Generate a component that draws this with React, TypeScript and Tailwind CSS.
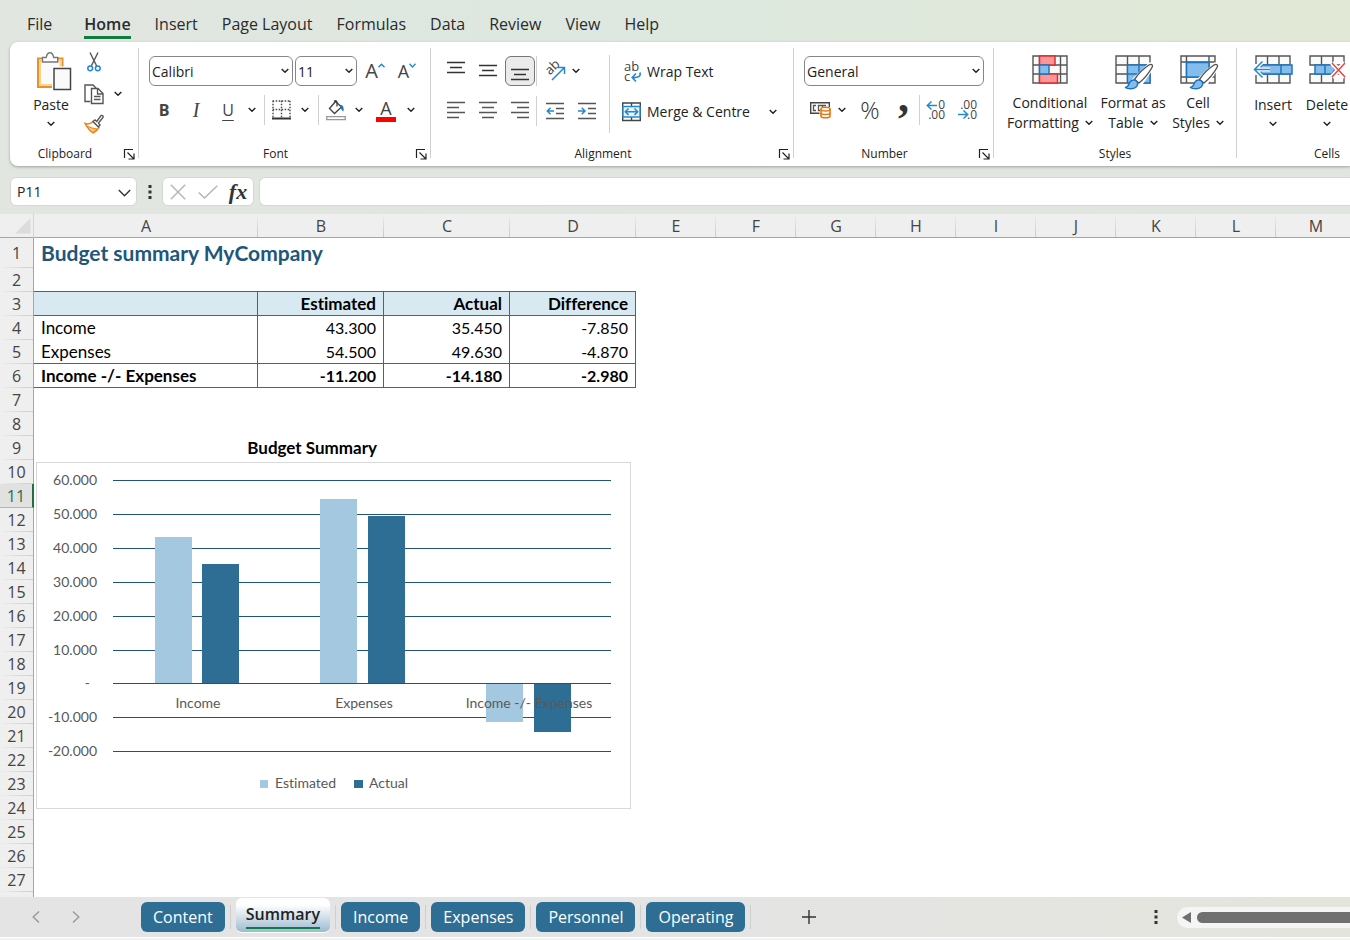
import type { ReactNode } from "react";

const menuTabs = ["Insert", "Page Layout", "Formulas", "Data", "Review", "View", "Help"];
const columns = ["A", "B", "C", "D", "E", "F", "G", "H", "I", "J", "K", "L", "M"];
const rowCount = 27;
const activeRow = 11;

const budget = [
  { name: "Income", estimated: 43300, actual: 35450 },
  { name: "Expenses", estimated: 54500, actual: 49630 },
  { name: "Income -/- Expenses", estimated: -11200, actual: -14180 },
];

function format(value: number) {
  return String(value).replace(/(\d)(?=(\d{3})+$)/g, "$1.");
}

const cells: Record<string, string> = {
  A1: "Budget summary MyCompany",
  B3: "Estimated",
  C3: "Actual",
  D3: "Difference",
  B9: "Budget Summary",
};
budget.forEach((item, i) => {
  const row = i + 4;
  cells[`A${row}`] = item.name;
  cells[`B${row}`] = format(item.estimated);
  cells[`C${row}`] = format(item.actual);
  cells[`D${row}`] = format(item.actual - item.estimated);
});

function Chevron({ className = "" }: { className?: string }) {
  return (
    <svg width="8" height="6" viewBox="0 0 8 6" fill="none" stroke="#222" strokeWidth="1.4" className={`shrink-0 ${className}`}>
      <path d="M.7 1 4 4.3 7.3 1" />
    </svg>
  );
}

function Icon({ w, h, children }: { w: number; h: number; children: ReactNode }) {
  return (
    <svg width={w} height={h} viewBox={`0 0 ${w} ${h}`} fill="none" className="shrink-0 overflow-visible">
      {children}
    </svg>
  );
}

function IconButton({ label, className = "w-8", children }: { label: string; className?: string; children: ReactNode }) {
  return (
    <button type="button" aria-label={label} className={`flex h-8 shrink-0 items-center justify-center ${className}`}>
      {children}
    </button>
  );
}

function MenuArrow({ label, className = "w-4" }: { label: string; className?: string }) {
  return (
    <IconButton label={label} className={className}>
      <Chevron />
    </IconButton>
  );
}

function SmallDivider() {
  return <div className="h-[30px] w-px shrink-0 bg-[#d0d0d0]" />;
}

function GroupDivider() {
  return <div className="h-[110px] w-px shrink-0 bg-[#d0d0d0]" />;
}

function Group({ label, launcher = true, className = "", children }: { label: string; launcher?: boolean; className?: string; children: ReactNode }) {
  return (
    <section aria-label={label} className={`flex shrink-0 flex-col ${className}`}>
      <div className="h-[98px]">{children}</div>
      <div className="flex h-4 items-center">
        <h2 className={`flex-1 text-center text-xs leading-4 ${launcher ? "pr-1" : ""}`}>{label}</h2>
        {launcher && (
          <button type="button" aria-label={`${label} settings`} className="mr-1">
            <Icon w={10} h={11}>
              <path d="M.5 9V.5H9M3.5 3.5l6 6M10 4.5v5.5H4.5" stroke="#222" strokeWidth="1.2" />
            </Icon>
          </button>
        )}
      </div>
    </section>
  );
}

function SelectBox({ label, value, className }: { label: string; value: string; className: string }) {
  return (
    <div className={`relative shrink-0 ${className}`}>
      <select aria-label={label} defaultValue={value} className="h-[30px] w-full appearance-none rounded-md border border-[#868686] bg-white pt-0.5 pl-0.5 text-sm text-[#222]">
        <option>{value}</option>
      </select>
      <Chevron className="pointer-events-none absolute top-3 right-1" />
    </div>
  );
}

function Lines({ lines, color = "#555" }: { lines: [number, number, number][]; color?: string }) {
  return (
    <Icon w={18} h={20}>
      {lines.map(([x1, x2, y]) => (
        <path key={y} d={`M${x1} ${y}.5H${x2}`} stroke={color} strokeWidth="1.4" />
      ))}
    </Icon>
  );
}

function PasteIcon() {
  return (
    <Icon w={34} h={39}>
      <path d="M1 6.500h24.500v28.500H1z" fill="#fafafa" stroke="#e8912d" strokeWidth="2" />
      <path d="M3 8.500h20.500v24.500H3z" stroke="#fbd48c" strokeWidth="2" />
      <path d="M5.500 10V5.500h3.700C9.700 2.700 11 .7 13 .7s3.200 2 3.700 4.800h4V10z" fill="#fff" stroke="#777" strokeWidth="1.4" />
      <path d="M17 16.500h16.500v21H17z" stroke="#fff" strokeWidth="4" />
      <path d="M17 16.500h16.500v21H17z" fill="#fafafa" stroke="#444" strokeWidth="1.5" />
    </Icon>
  );
}

function CutIcon() {
  return (
    <Icon w={14} h={20}>
      <path d="M3 .5 9.700 14M11 .5 4.300 14" stroke="#555" strokeWidth="1.4" />
      <circle cx="3.200" cy="16.300" r="2.400" stroke="#2488cf" strokeWidth="1.500" />
      <circle cx="10.800" cy="16.300" r="2.400" stroke="#2488cf" strokeWidth="1.500" />
    </Icon>
  );
}

function CopyIcon() {
  return (
    <Icon w={20} h={20}>
      <path d="M6.500 17.500H1V1h8l3 3" stroke="#555" strokeWidth="1.400" />
      <path d="M7.500 4.500H14l5 5v10H7.500z" fill="#fff" stroke="#555" strokeWidth="1.400" />
      <path d="M13.500 4.500V10H19M10 12.500h6.500M10 15.500h6.500" stroke="#555" strokeWidth="1.300" />
    </Icon>
  );
}

function PainterIcon() {
  return (
    <Icon w={20} h={20}>
      <path d="M1 9.500c3 1 5.500.5 8-2l6 6c-1 2-3 4-6 5.500C6.500 17.500 3.500 14 1 9.500z" fill="#fff" stroke="#e8821e" strokeWidth="1.400" />
      <path d="M3 12c4 2 7 2.500 10.500 3L9 18.500C6.500 17 4.500 15 3 12z" fill="#f9c877" stroke="#e8821e" strokeWidth="1" />
      <path d="m9 7.500 2-1.500 1.800 1.500L17 1.500c1.500-.5 2.500.5 2 2L14.500 9l1.500 2-1.500 2z" fill="#fff" stroke="#555" strokeWidth="1.400" />
    </Icon>
  );
}

function BordersIcon() {
  return (
    <Icon w={19} h={20}>
      <path d="M.7 1h17.600M.7 9.500h17.600M1 .7v17M9.500 .7v17M18 .7v17" stroke="#444" strokeWidth="1.400" strokeDasharray="1.500 1.500" />
      <path d="M0 18.500h19" stroke="#333" strokeWidth="2" />
    </Icon>
  );
}

function FillIcon() {
  return (
    <Icon w={20} h={22}>
      <path d="M9.500 2.500 3.500 9.500l5 5 7-6.500z" fill="#fff" stroke="#444" strokeWidth="1.400" />
      <path d="M8 2.500c1.500-1.500 3-.5 3 1v4" stroke="#444" strokeWidth="1.300" />
      <path d="M14 6c3-.5 4 2 3.500 6.500-2-1-3-3.500-3.500-6.500z" fill="#1c74bf" />
      <path d="M.7 17.700h18.600v3H.7z" fill="#fff" stroke="#999" strokeWidth="1.300" />
    </Icon>
  );
}

function OrientationIcon() {
  return (
    <Icon w={22} h={22}>
      <text x="0" y="0" transform="translate(6 15.500) rotate(-45)" fontSize="13" fill="#444">ab</text>
      <path d="M8 20 20 8M14 7.500h6.500V14" stroke="#2488cf" strokeWidth="1.500" />
    </Icon>
  );
}

function WrapIcon() {
  return (
    <Icon w={18} h={20}>
      <text x="2" y="9" fontSize="13" fill="#444">ab</text>
      <text x="2" y="19" fontSize="13" fill="#444">c</text>
      <path d="M18 10.500c1 4-2 5.500-7.500 5M14 11.500 10.200 15.500l3.800 4" stroke="#2488cf" strokeWidth="1.600" />
    </Icon>
  );
}

function MergeIcon() {
  return (
    <Icon w={18} h={20}>
      <path d="M.7 1h17.600v17.500H.7zM9.500 1v4M9.500 15v4" stroke="#444" strokeWidth="1.400" />
      <path d="M1 4.500h17V15H1z" fill="#e9f3fb" stroke="#2488cf" strokeWidth="1.400" />
      <path d="M3.500 9.700h12M6.500 6.500 3.300 9.700l3.200 3.200M12.500 6.500l3.200 3.200-3.200 3.200" stroke="#2488cf" strokeWidth="1.500" />
    </Icon>
  );
}

function IndentIcon({ outward = false }: { outward?: boolean }) {
  return (
    <Icon w={18} h={18}>
      <path d="M0 1.500h18M10 6.500h8M10 11.500h8M0 16.500h18" stroke="#555" strokeWidth="1.400" />
      <path d={outward ? "M8 9H1.500M4.500 5.800 1.300 9l3.200 3.200" : "M0 9h6.500M3.700 5.800 7 9l-3.300 3.200"} stroke="#2488cf" strokeWidth="1.500" />
    </Icon>
  );
}

function CurrencyIcon() {
  return (
    <Icon w={21} h={18}>
      <path d="M9.500 12.300H.7V1.700h18.600V6" stroke="#444" strokeWidth="1.400" />
      <path d="M6 4.500H3.500v5H6M12 4.500H8.500v5H10M16 4.500h-3.500V6" stroke="#555" strokeWidth="1.300" />
      <path d="M11 8v7c0 1 2 1.800 4.500 1.800S20 16 20 15V8c0-1-2-1.700-4.500-1.700S11 7 11 8z" fill="#fff" stroke="#e8760a" strokeWidth="1.600" />
      <path d="M11 8.200c0 1 2 1.700 4.500 1.700S20 9.200 20 8.200M11 12c0 1 2 1.500 4.500 1.500S20 13 20 12" stroke="#e8760a" strokeWidth="1.500" />
    </Icon>
  );
}

function DecimalIcon({ increase = false }: { increase?: boolean }) {
  return increase ? (
    <Icon w={20} h={20}>
      <text x="19" y="9" textAnchor="end" fontSize="12" fill="#444">0</text>
      <text x="19" y="19" textAnchor="end" fontSize="12" fill="#444">.00</text>
      <path d="M11 5.500H1.500M5.500 1.500 1.300 5.500l4.200 4" stroke="#2488cf" strokeWidth="1.500" />
    </Icon>
  ) : (
    <Icon w={20} h={20}>
      <text x="19" y="9" textAnchor="end" fontSize="12" fill="#444">.00</text>
      <text x="19" y="19" textAnchor="end" fontSize="12" fill="#444">.0</text>
      <path d="M0 14.500h9.500M5.500 10.500l4.200 4-4.200 4" stroke="#2488cf" strokeWidth="1.500" />
    </Icon>
  );
}

function ConditionalIcon() {
  return (
    <Icon w={36} h={30}>
      <path d="M1 1h34v27H1zM1 10h34M1 19h34M7.500 1v27M28.500 1v27" fill="#fafafa" stroke="#555" strokeWidth="1.400" />
      <path d="M7.500 1H23v9H7.500zM7.500 19h18v9h-18z" fill="#ff9499" stroke="#d9302c" strokeWidth="1.500" />
      <path d="M7.500 10H17v9H7.500z" fill="#84bdec" stroke="#1c74bf" strokeWidth="1.500" />
    </Icon>
  );
}

function Brush() {
  return (
    <>
      <path d="M19 25 35 9.500c1.500-.5 3 .5 2.500 2L25.500 29z" fill="#fff" stroke="#fff" strokeWidth="4" />
      <path d="M19.500 24.500c4-6 9-11 14.500-14.500 2.500-1.500 4.500 0 3 2.500C34 18 29.500 23.500 24 28z" fill="#fff" stroke="#555" strokeWidth="1.400" />
      <path d="M10 32.500c3.500 0 3.500-3 5-5.500 2-3 6-2.500 7.500.5 1 4-3 6.500-7 6.300-2.500 0-4-.5-5.500-1.300z" fill="#84bdec" stroke="#1c74bf" strokeWidth="1.400" />
    </>
  );
}

function TableStyleIcon() {
  return (
    <Icon w={36} h={36}>
      <path d="M1 1h34v27H1zM1 10h34M1 19h34M12.500 1v27M24 1v27" fill="#fafafa" stroke="#555" strokeWidth="1.400" />
      <path d="M12.500 10H35v18H12.500z" fill="#84bdec" stroke="#1c74bf" strokeWidth="1.400" />
      <path d="M12.500 19H35M24 10v18" stroke="#1c74bf" strokeWidth="1.400" />
      <Brush />
    </Icon>
  );
}

function CellStyleIcon() {
  return (
    <Icon w={36} h={36}>
      <path d="M1 1h34v27H1zM1 7h34M1 22h34M6.500 1v27M29 1v27" fill="#fafafa" stroke="#555" strokeWidth="1.400" />
      <path d="M6.500 7.500H29V22H6.500z" fill="#84bdec" stroke="#1c74bf" strokeWidth="1.500" />
      <Brush />
    </Icon>
  );
}

function InsertCellsIcon() {
  return (
    <Icon w={40} h={30}>
      <path d="M3 1h34v27H3zM3 10h34M3 19h34M14.500 1v27M26 1v27" fill="#fafafa" stroke="#555" strokeWidth="1.400" />
      <path d="M0 9h10v11H0z" fill="#fff" />
      <path d="M8 10h31v9H8z" fill="#84bdec" stroke="#1c74bf" strokeWidth="1.500" />
      <path d="M28 10v9" stroke="#1c74bf" strokeWidth="1.500" />
      <path d="M17 14.500H2M9.500 6.500 1.500 14.500l8 8" stroke="#fff" strokeWidth="4" />
      <path d="M17 14.500H2M9.500 6.500 1.500 14.500l8 8" stroke="#2488cf" strokeWidth="1.500" />
    </Icon>
  );
}

function DeleteCellsIcon() {
  return (
    <Icon w={36} h={30}>
      <path d="M1 10V1h34v9zM12.500 1v9M24 1v9M1 19h34v9H1zM12.500 19v9M24 19v9" fill="#fafafa" stroke="#555" strokeWidth="1.400" />
      <path d="M6 10h17l3 4.500-3 4.500H6z" fill="#84bdec" stroke="#1c74bf" strokeWidth="1.500" />
      <path d="M16 10v9" stroke="#1c74bf" strokeWidth="1.500" />
      <path d="m23 8 13 14M36 8 23 22" stroke="#fff" strokeWidth="5" />
      <path d="m23 8 13 14M36 8 23 22" stroke="#f0413e" strokeWidth="1.500" />
    </Icon>
  );
}

function StyleButton({ icon, first, second, className }: { icon: ReactNode; first: string; second: string; className: string }) {
  return (
    <button type="button" className={`flex shrink-0 flex-col items-center pt-[7px] whitespace-nowrap ${className}`}>
      <span className="flex h-[38px] items-start">{icon}</span>
      <span className="text-sm leading-5">{first}</span>
      <span className="flex items-center gap-1.5 text-sm leading-5">
        {second}
        <Chevron />
      </span>
    </button>
  );
}

function CellsButton({ icon, label, className }: { icon: ReactNode; label: string; className: string }) {
  return (
    <button type="button" className={`flex shrink-0 flex-col items-center pt-[7px] ${className}`}>
      <span className="flex h-10 items-start">{icon}</span>
      <span className="text-sm leading-5">{label}</span>
      <Chevron className="mt-1.5" />
    </button>
  );
}

function Ribbon() {
  return (
    <div className="ml-2.5 flex shrink-0 overflow-hidden rounded-l-lg bg-white pt-1.5 pb-1 text-[#222] shadow-[0_1px_3px_rgba(0,0,0,0.3)]">
      <Group label="Clipboard" className="w-32">
        <div className="flex pl-[19px]">
          <button type="button" className="flex w-11 flex-col items-center pt-1">
            <span className="pl-1.5">
              <PasteIcon />
            </span>
            <span className="text-sm leading-7">Paste</span>
            <Chevron className="mt-0.5" />
          </button>
          <div className="flex flex-col pl-[5px]">
            <IconButton label="Cut" className="-mt-0.5 w-8">
              <CutIcon />
            </IconButton>
            <div className="flex">
              <IconButton label="Copy">
                <CopyIcon />
              </IconButton>
              <MenuArrow label="Copy options" />
            </div>
            <IconButton label="Format Painter" className="-mt-0.5 w-8">
              <PainterIcon />
            </IconButton>
          </div>
        </div>
      </Group>
      <GroupDivider />

      <Group label="Font" className="w-[291px]">
        <div className="flex items-center gap-0.5 pt-2 pl-2.5">
          <SelectBox label="Font name" value="Calibri" className="w-36" />
          <SelectBox label="Font size" value="11" className="w-[62px]" />
          <button type="button" aria-label="Increase font size" className="flex w-8 items-start justify-center">
            <span className="text-xl leading-6 text-[#444]">A</span>
            <svg width="7" height="5" viewBox="0 0 7 5" fill="none" className="mt-1"><path d="M.5 4.300 3.500 1.200l3 3.100" stroke="#2488cf" strokeWidth="1.400" /></svg>
          </button>
          <button type="button" aria-label="Decrease font size" className="flex w-7 items-start justify-center">
            <span className="text-lg leading-6 text-[#444]">A</span>
            <svg width="7" height="5" viewBox="0 0 7 5" fill="none" className="mt-1"><path d="M.5 .8 3.500 3.900l3-3.100" stroke="#2488cf" strokeWidth="1.400" /></svg>
          </button>
        </div>
        <div className="flex items-center pt-2 pl-[9px] text-base text-[#444]">
          <IconButton label="Bold"><span className="font-bold">B</span></IconButton>
          <IconButton label="Italic"><span className="font-['Liberation_Serif',serif] text-xl italic">I</span></IconButton>
          <IconButton label="Underline"><span className="underline underline-offset-4">U</span></IconButton>
          <MenuArrow label="Underline options" />
          <div className="w-1" />
          <SmallDivider />
          <IconButton label="Borders"><BordersIcon /></IconButton>
          <MenuArrow label="Border options" />
          <div className="w-[5px]" />
          <SmallDivider />
          <IconButton label="Fill colour" className="w-[34px]"><FillIcon /></IconButton>
          <MenuArrow label="Fill options" className="w-3" />
          <IconButton label="Font colour" className="w-[42px] flex-col">
            <span className="text-lg leading-[18px]">A</span>
            <span className="h-[5px] w-5 bg-[#f00]" />
          </IconButton>
          <Chevron />
        </div>
      </Group>
      <GroupDivider />

      <Group label="Alignment" className="w-[362px]">
        <div className="flex">
          <div className="flex w-[178px] flex-col gap-2 pt-[7px] pl-[9px]">
            <div className="flex items-center">
              <IconButton label="Top align"><Lines lines={[[0, 18, 1], [3, 15, 6], [0, 18, 11]]} color="#333" /></IconButton>
              <IconButton label="Middle align"><Lines lines={[[0, 18, 4], [3, 15, 9], [0, 18, 14]]} color="#333" /></IconButton>
              <div className="flex w-8 justify-center">
                <button type="button" aria-label="Bottom align" className="flex h-[30px] w-[30px] items-center justify-center rounded-md border border-[#777] bg-[#ebebeb]">
                  <Lines lines={[[0, 18, 8], [3, 15, 13], [0, 18, 18]]} color="#333" />
                </button>
              </div>
              <SmallDivider />
              <IconButton label="Orientation" className="w-[35px]"><OrientationIcon /></IconButton>
              <Chevron />
            </div>
            <div className="flex items-center">
              <IconButton label="Align left"><Lines lines={[[0, 18, 1], [0, 12, 6], [0, 18, 11], [0, 12, 16]]} /></IconButton>
              <IconButton label="Centre"><Lines lines={[[0, 18, 1], [3, 15, 6], [0, 18, 11], [3, 15, 16]]} /></IconButton>
              <IconButton label="Align right"><Lines lines={[[0, 18, 1], [6, 18, 6], [0, 18, 11], [6, 18, 16]]} /></IconButton>
              <SmallDivider />
              <IconButton label="Decrease indent" className="w-9"><IndentIcon outward /></IconButton>
              <IconButton label="Increase indent" className="w-7"><IndentIcon /></IconButton>
            </div>
          </div>
          <div className="mt-[7px] h-[78px] w-px bg-[#d0d0d0]" />
          <div className="flex flex-col gap-2 pt-2 pl-3 text-sm">
            <button type="button" className="flex h-8 items-center gap-[7px] whitespace-nowrap">
              <WrapIcon />
              Wrap Text
            </button>
            <button type="button" className="flex h-8 items-center gap-[7px] whitespace-nowrap">
              <MergeIcon />
              Merge &amp; Centre
              <Chevron className="ml-3" />
            </button>
          </div>
        </div>
      </Group>
      <GroupDivider />

      <Group label="Number" className="w-[199px]">
        <div className="pt-2 pl-2.5">
          <SelectBox label="Number format" value="General" className="w-[180px]" />
        </div>
        <div className="flex items-center pt-2 pl-2 text-[#333]">
          <IconButton label="Accounting format" className="w-9"><CurrencyIcon /></IconButton>
          <Chevron />
          <IconButton label="Percent style" className="w-12"><span className="text-2xl font-light">%</span></IconButton>
          <IconButton label="Comma style" className="w-5">
            <Icon w={16} h={24}>
              <text x="2" y="14" fontSize="44" fontWeight="700" fill="#333" className="font-['Liberation_Serif',serif]">,</text>
            </Icon>
          </IconButton>
          <div className="w-[5px]" />
          <SmallDivider />
          <IconButton label="Increase decimal"><DecimalIcon increase /></IconButton>
          <IconButton label="Decrease decimal"><DecimalIcon /></IconButton>
        </div>
      </Group>
      <GroupDivider />

      <Group label="Styles" launcher={false} className="w-[242px]">
        <div className="flex pl-2">
          <StyleButton icon={<ConditionalIcon />} first="Conditional" second="Formatting" className="w-24" />
          <StyleButton icon={<TableStyleIcon />} first="Format as" second="Table" className="w-[70px]" />
          <StyleButton icon={<CellStyleIcon />} first="Cell" second="Styles" className="w-[60px]" />
        </div>
      </Group>
      <GroupDivider />

      <Group label="Cells" launcher={false} className="w-[180px]">
        <div className="flex pl-2">
          <CellsButton icon={<InsertCellsIcon />} label="Insert" className="w-14" />
          <CellsButton icon={<DeleteCellsIcon />} label="Delete" className="w-[52px]" />
        </div>
      </Group>
    </div>
  );
}

function Dots() {
  return (
    <Icon w={4} h={14}>
      <path d="M.5 0h3v3h-3zM.5 5.500h3v3h-3zM.5 11h3v3h-3z" fill="#333" />
    </Icon>
  );
}

function FormulaBar() {
  return (
    <div className="flex shrink-0 pt-[11px] pb-2 pl-2.5">
      <div className="relative w-[127px] shrink-0">
        <input aria-label="Name box" defaultValue="P11" className="h-[29px] w-full rounded-md border border-[#d5d8d2] bg-white pl-1.5 text-sm text-[#222]" />
        <svg width="13" height="8" viewBox="0 0 13 8" fill="none" className="pointer-events-none absolute top-3 right-1.5">
          <path d="M.8 1 6.500 6.700 12.200 1" stroke="#333" strokeWidth="1.400" />
        </svg>
      </div>
      <div className="flex w-[25px] items-center justify-center">
        <Dots />
      </div>
      <div className="flex h-[29px] w-[92px] items-center rounded-md border border-[#d5d8d2] bg-white">
        <IconButton label="Cancel" className="w-[30px]">
          <Icon w={16} h={16}><path d="m.8.8 14.400 14.400M15.200.8.8 15.200" stroke="#b5b5b5" strokeWidth="1.400" /></Icon>
        </IconButton>
        <IconButton label="Enter" className="w-[30px]">
          <Icon w={20} h={14}><path d="M.7 7.500 6.500 13 19.300.7" stroke="#b5b5b5" strokeWidth="1.500" /></Icon>
        </IconButton>
        <IconButton label="Insert function" className="w-[30px]">
          <span className="font-['Liberation_Serif',serif] text-[22px] leading-6 font-bold text-[#333] italic">fx</span>
        </IconButton>
      </div>
      <input aria-label="Formula" className="ml-[5px] h-[29px] min-w-0 flex-1 rounded-l-md border border-r-0 border-[#d5d8d2] bg-white px-2 text-sm" />
    </div>
  );
}

const zeroY = 221.95;
const perThousand = 3.393;
const ticks = [60000, 50000, 40000, 30000, 20000, 10000, 0, -10000, -20000];

function Bar({ x, value, fill }: { x: number; value: number; fill: string }) {
  const base = Math.round(zeroY);
  const end = Math.round(zeroY - (value / 1000) * perThousand);
  return <rect x={Math.round(x)} y={Math.min(base, end)} width="37" height={Math.abs(base - end)} fill={fill} />;
}

function BudgetChart() {
  return (
    <svg width="595" height="347" viewBox="0 0 595 347" role="img" aria-label="Budget Summary" fontSize="14" fill="#595959" className="bg-white font-['Lato','Open_Sans',sans-serif] [font-variant-ligatures:none]">
      <rect x=".5" y=".5" width="594" height="346" fill="none" stroke="#d9d9d9" />
      {ticks.map((tick) => {
        const y = Math.floor(zeroY - (tick / 1000) * perThousand) + 0.5;
        return (
          <g key={tick}>
            <path d={`M77 ${y}H575`} stroke="#1f5478" />
            <text x={tick === 0 ? 54 : 61} y={y + 4.5} textAnchor="end">{tick === 0 ? "-" : format(tick)}</text>
          </g>
        );
      })}
      {budget.map((item, i) => {
        const center = 161.6 + i * 165.7;
        return (
          <g key={item.name}>
            <Bar x={center - 43} value={item.estimated} fill="#a5c8e1" />
            <Bar x={center + 4.6} value={item.actual} fill="#2e6e94" />
            <text x={Math.ceil(center)} y="246" textAnchor="middle">{item.name}</text>
          </g>
        );
      })}
      <path d="M77 221.500H575" stroke="#1f5478" />
      <rect x="224" y="318" width="8" height="8" fill="#a5c8e1" />
      <text x="239" y="326">Estimated</text>
      <rect x="318" y="318" width="9" height="8" fill="#2e6e94" />
      <text x="333" y="326">Actual</text>
    </svg>
  );
}

function cellClass(col: string, row: number) {
  const inTable = col <= "D";
  const classes = ["p-0 px-[7px] align-middle whitespace-nowrap"];
  if (row === 1) classes.push("text-[21px] leading-6 font-bold text-[#1f567c]");
  else if (col === "A" || row === 3 || row === 9) classes.push("text-[17px]");
  if (row === 3 && inTable) classes.push("bg-[#d9e9f2]");
  if (row === 3 || row === 6 || row === 9) classes.push("font-bold");
  if (inTable && [2, 3, 5, 6].includes(row)) classes.push("border-b border-b-[#2e6e94]");
  if (inTable && row >= 3 && row <= 6) classes.push("border-r border-r-[#2e6e94]");
  return classes.join(" ");
}

function Sheet() {
  return (
    <main className="relative flex min-h-0 flex-1 flex-col overflow-hidden bg-white">
      <table className="w-full table-fixed border-separate border-spacing-0 font-['Lato','Open_Sans',sans-serif] text-base leading-5 text-black [font-variant-ligatures:none]">
        <colgroup>
          <col className="w-[34px]" />
          <col className="w-56" />
          <col className="w-[126px]" />
          <col className="w-[126px]" />
          <col className="w-[126px]" />
          {columns.slice(4).map((col) => (
            <col key={col} className="w-20" />
          ))}
          <col />
        </colgroup>
        <thead>
          <tr className="h-6 bg-[#efefef] font-['Open_Sans',sans-serif] text-[#444]">
            <th className="border-r border-b border-r-[#d5d5d5] border-b-[#a6a6a6] p-0">
              <svg width="16" height="16" viewBox="0 0 16 16" className="mr-0.5 ml-auto"><path d="M15.500 0v15.500H0z" fill="#dcdcdc" /></svg>
            </th>
            {columns.map((col) => (
              <th key={col} scope="col" className="border-b border-[#a6a6a6] bg-[linear-gradient(to_bottom,#efefef,#c8c8c8)] bg-[length:1px_100%] bg-right bg-no-repeat p-0 font-normal">
                {col}
              </th>
            ))}
            <td className="border-b border-[#a6a6a6] p-0" />
          </tr>
        </thead>
        <tbody>
          {Array.from({ length: rowCount }, (_, i) => i + 1).map((row) => (
            <tr key={row} className={row === 1 ? "h-[30px]" : "h-6"}>
              <th
                scope="row"
                className={
                  row === activeRow
                    ? "border-r-2 border-b border-r-[#1e7145] border-b-[#b5b5b5] bg-[#e1e1e1] p-0 font-['Open_Sans',sans-serif] font-normal text-[#1e7145]"
                    : "border-r border-r-[#a6a6a6] bg-[#efefef] bg-[linear-gradient(to_right,#efefef,#cccccc)] bg-[length:100%_1px] bg-bottom bg-no-repeat p-0 font-['Open_Sans',sans-serif] font-normal text-[#444]"
                }
              >
                {row}
              </th>
              {columns.map((col) => (
                <td key={col} className={cellClass(col, row)}>
                  <div className={`flex ${col === "A" ? "justify-start" : "justify-end"}`}>{cells[`${col}${row}`]}</div>
                </td>
              ))}
            </tr>
          ))}
        </tbody>
      </table>
      <div className="w-[34px] flex-1 border-r border-[#a6a6a6] bg-[#efefef]" />
      {/* floating chart object, anchored over A10 */}
      <div className="absolute top-[248px] left-9">
        <BudgetChart />
      </div>
    </main>
  );
}

function TabSeparator() {
  return <div className="h-6 w-px shrink-0 bg-[#cfcfcf]" />;
}

function SheetTabs() {
  return (
    <footer className="shrink-0 bg-[#f3f3f3] pb-0.5">
      <div className="flex h-[41px] items-center border-b border-white bg-linear-to-r from-[#e4e4e4] from-50% to-[#e3e5dc] text-base text-white">
        <div className="flex w-[141px] shrink-0 items-center pl-4">
          <IconButton label="Previous sheet" className="w-10">
            <Icon w={8} h={12}><path d="M7 .5 1.200 6 7 11.500" stroke="#999" strokeWidth="1.400" /></Icon>
          </IconButton>
          <IconButton label="Next sheet" className="w-10">
            <Icon w={8} h={12}><path d="M1 .5 6.800 6 1 11.500" stroke="#999" strokeWidth="1.400" /></Icon>
          </IconButton>
        </div>
        <div className="flex items-center gap-[5px]">
          <button type="button" className="h-[30px] rounded-md bg-[#2e6e94] px-3">Content</button>
          <TabSeparator />
          <button type="button" aria-current="page" className="mb-1 h-[35px] rounded-md border-b border-white bg-linear-to-b from-white from-20% to-[#9dbbd0] px-2.5 leading-[26px] font-semibold text-[#222]">
            <span className="block border-b-2 border-[#107c41]">Summary</span>
          </button>
          {["Income", "Expenses", "Personnel", "Operating"].map((name) => (
            <div key={name} className="flex items-center gap-[5px]">
              <TabSeparator />
              <button type="button" className="h-[30px] rounded-md bg-[#2e6e94] px-3">{name}</button>
            </div>
          ))}
          <TabSeparator />
        </div>
        <IconButton label="New sheet" className="ml-[42px] w-8">
          <Icon w={14} h={14}><path d="M7 0v14M0 7h14" stroke="#333" strokeWidth="1.400" /></Icon>
        </IconButton>
        <div className="ml-auto flex w-[196px] shrink-0 items-center">
          <Dots />
          <div className="ml-[19px] flex h-[21px] flex-1 items-center gap-1.5 rounded-l-full bg-[#f5f5f5] pl-[5px]">
            <button type="button" aria-label="Scroll left">
              <Icon w={9} h={11}><path d="M9 0v11L0 5.500z" fill="#707070" /></Icon>
            </button>
            <div className="h-[11px] flex-1 rounded-l-full bg-[#707070]" />
          </div>
        </div>
      </div>
    </footer>
  );
}

export default function App() {
  return (
    <div className="flex h-screen flex-col overflow-hidden bg-linear-to-br from-[#e1e6e1] to-[#e2e5de] font-['Open_Sans','Noto_Sans',sans-serif]">
      <nav aria-label="Ribbon tabs" className="flex h-[42px] shrink-0 items-center gap-6 bg-linear-to-r from-[#e1e6e0] via-[#dde8df] to-[#e2e8d6] pl-[27px] text-base text-[#2b2b2b]">
        <a href="#file" className="mr-2 pt-1.5">File</a>
        <a href="#home" aria-current="page" className="border-b-3 border-[#107c41] pt-2 leading-6 font-semibold">Home</a>
        {menuTabs.map((tab) => (
          <a key={tab} href={`#${tab.toLowerCase().replace(" ", "-")}`} className="pt-1.5">{tab}</a>
        ))}
      </nav>
      <Ribbon />
      <FormulaBar />
      <Sheet />
      <SheetTabs />
    </div>
  );
}
